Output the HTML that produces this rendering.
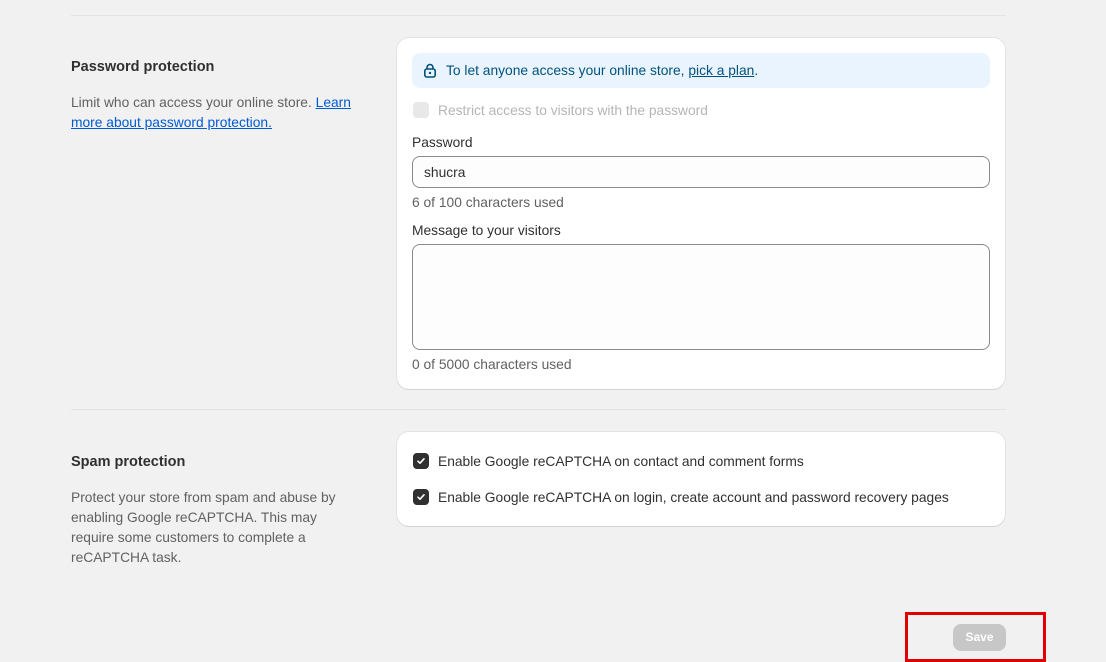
<!DOCTYPE html><html><head><style>
body{margin:0;width:1106px;height:662px;background:#f1f1f1;font-family:"Liberation Sans",sans-serif;font-size:13.8px;color:#303030;position:relative;overflow:hidden}
.a{position:absolute}
.card{position:absolute;background:#fff;border-radius:12px;box-shadow:0 1px 0 #d4d4d4,0 0 0 1px #e3e3e3}
h3{margin:0;font-size:14.5px;font-weight:bold;color:#303030}
.p{color:#616161;line-height:20px}
a{color:#005bd3;text-decoration:underline}
.cb{position:absolute;width:16px;height:16px;border-radius:4px;background:#303030}
.cb svg{position:absolute;left:3px;top:3px}
.inp{position:absolute;border:1px solid #8a8a8a;border-radius:8px;background:#fdfdfd}
</style></head><body>
<div class="a" style="left:71px;top:15px;width:935px;border-top:1px solid #e3e3e3"></div>
<h3 class="a" style="left:71px;top:59px">Password protection</h3>
<div class="a p" style="left:71px;top:93px;width:290px">Limit who can access your online store. <a>Learn more about password protection.</a></div>
<div class="card" style="left:397px;top:38px;width:608px;height:351px">
 <div class="a" style="left:15px;top:15px;width:578px;height:35px;background:#eaf4ff;border-radius:8px"></div>
 <svg class="a" style="left:26px;top:25px" width="14" height="15" viewBox="0 0 14 15"><path d="M4 6V4.5a3 3 0 0 1 6 0V6" fill="none" stroke="#00527c" stroke-width="1.6"/><rect x="1.8" y="6" width="10.4" height="8" rx="2" fill="none" stroke="#00527c" stroke-width="1.6"/><circle cx="7" cy="10" r="1.2" fill="#00527c"/></svg>
 <div class="a" style="left:49px;top:25px;color:#00527c">To let anyone access your online store, <a style="color:#00527c">pick a plan</a>.</div>
 <div class="a" style="left:16px;top:64px;width:16px;height:16px;border-radius:4px;background:#e8e8e8"></div>
 <div class="a" style="left:41px;top:65px;color:#b5b5b5">Restrict access to visitors with the password</div>
 <div class="a" style="left:15px;top:97px">Password</div>
 <div class="inp" style="left:15px;top:118px;width:576px;height:30px"><span class="a" style="left:11px;top:8px">shucra</span></div>
 <div class="a" style="left:15px;top:157px;color:#616161">6 of 100 characters used</div>
 <div class="a" style="left:15px;top:185px">Message to your visitors</div>
 <div class="inp" style="left:15px;top:206px;width:576px;height:104px"></div>
 <div class="a" style="left:15px;top:319px;color:#616161">0 of 5000 characters used</div>
</div>
<div class="a" style="left:71px;top:409px;width:935px;border-top:1px solid #e3e3e3"></div>
<h3 class="a" style="left:71px;top:454px">Spam protection</h3>
<div class="a p" style="left:71px;top:488px;width:275px">Protect your store from spam and abuse by enabling Google reCAPTCHA. This may require some customers to complete a reCAPTCHA task.</div>
<div class="card" style="left:397px;top:432px;width:608px;height:94px">
 <div class="cb" style="left:16px;top:21px"><svg width="10" height="10" viewBox="0 0 10 10"><path d="M2 5.2l2 2 4-4.4" fill="none" stroke="#fff" stroke-width="1.6" stroke-linecap="round" stroke-linejoin="round"/></svg></div>
 <div class="a" style="left:41px;top:22px">Enable Google reCAPTCHA on contact and comment forms</div>
 <div class="cb" style="left:16px;top:57px"><svg width="10" height="10" viewBox="0 0 10 10"><path d="M2 5.2l2 2 4-4.4" fill="none" stroke="#fff" stroke-width="1.6" stroke-linecap="round" stroke-linejoin="round"/></svg></div>
 <div class="a" style="left:41px;top:58px">Enable Google reCAPTCHA on login, create account and password recovery pages</div>
</div>
<div class="a" style="left:953px;top:624px;width:53px;height:27px;border-radius:8px;background:#c7c7c7;color:#fff;font-weight:bold;font-size:12px;text-align:center;line-height:27px">Save</div>
<div class="a" style="left:905px;top:612px;width:135px;height:44px;border:3px solid #e00000"></div>
</body></html>
